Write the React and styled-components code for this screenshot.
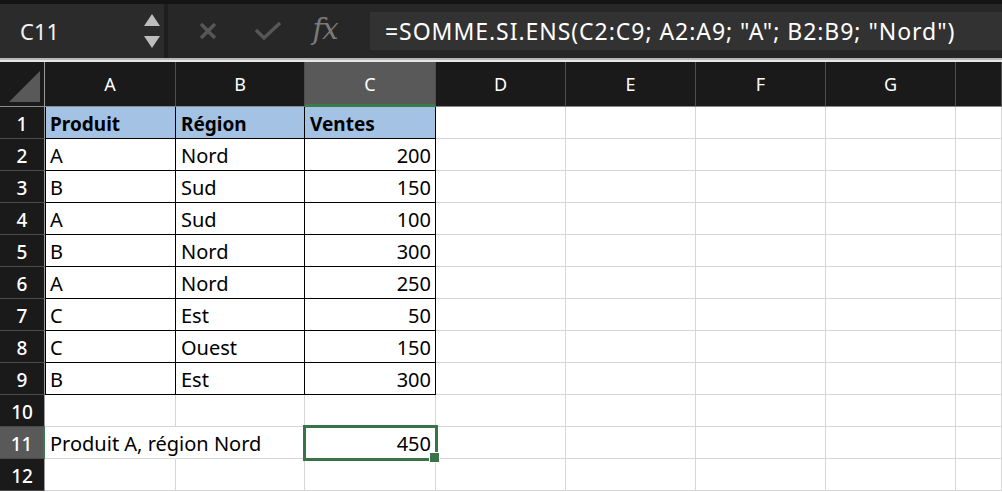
import React from "react";
import styled, { createGlobalStyle } from "styled-components";

const Global = createGlobalStyle`
  html, body { margin: 0; padding: 0; background: #ffffff; overflow: hidden; }
  body { font-family: "Noto Sans", "Open Sans", sans-serif; }
`;

const Page = styled.div`
  width: 1002px;
  height: 492px;
  display: flex;
  flex-direction: column;
  overflow: hidden;
`;

const Toolbar = styled.div`
  height: 54px;
  border-top: 4px solid #141414;
  background: #272727;
  display: flex;
  align-items: center;
`;

const NameBox = styled.div`
  width: 168px;
  height: 100%;
  background: #2b2b2b;
  border-right: 4px solid #1e1e1e;
  box-sizing: border-box;
  display: flex;
  align-items: center;
  justify-content: space-between;
  padding: 0 4px 0 20px;
  color: #f2f2f2;
  font-size: 22px;
`;

const Spinner = styled.div`
  display: flex;
  flex-direction: column;
  gap: 10px;
`;

const ToolIcon = styled.div`
  width: ${({ $w }) => $w}px;
  display: flex;
  justify-content: center;
  align-items: center;
`;

const Fx = styled.span`
  font-family: "DejaVu Serif", "Liberation Serif", serif;
  font-style: italic;
  font-size: 29px;
  color: #7a7a7a;
  letter-spacing: -1px;
  margin-top: -4px;
`;

const FormulaInput = styled.div`
  flex: 1;
  height: 38px;
  margin-left: 8px;
  background: #323232;
  color: #ffffff;
  font-size: 23px;
  letter-spacing: 0.95px;
  display: flex;
  align-items: center;
  padding-left: 15px;
  white-space: nowrap;
`;

const Divider = styled.div`
  height: 4px;
  border-top: 2px solid #b8b8b8;
  background: #e6e6e6;
  box-sizing: border-box;
`;

const Sheet = styled.div`
  display: grid;
  grid-template-columns: 45px 131px 129px 131px 130px 130px 130px 130px 1fr;
  grid-template-rows: 45px repeat(12, 32px);
  flex: 1;
  background: #ffffff;
`;

const ColHead = styled.div`
  box-sizing: border-box;
  background: ${({ $active }) => ($active ? "#595959" : "#1a1a1a")};
  border-right: 1px solid #4e4e4e;
  border-bottom: ${({ $active }) => ($active ? "3px solid #3b7a4a" : "1px solid #8a8a8a")};
  color: #ffffff;
  font-size: 18px;
  display: flex;
  align-items: center;
  justify-content: center;
  padding-top: ${({ $active }) => ($active ? "2px" : "0")};
`;

const Corner = styled.div`
  box-sizing: border-box;
  background: #1a1a1a;
  border-right: 1px solid #9a9a9a;
  border-bottom: 1px solid #8a8a8a;
  display: flex;
  align-items: flex-end;
  justify-content: flex-end;
  padding: 0 4px 4px 0;
`;

const RowHead = styled.div`
  box-sizing: border-box;
  background: ${({ $active }) => ($active ? "#595959" : "#1a1a1a")};
  border-right: ${({ $active }) => ($active ? "2px solid #3b7a4a" : "1px solid #9a9a9a")};
  border-bottom: 1px solid #4a4a4a;
  color: #ffffff;
  font-size: 19px;
  font-weight: 500;
  display: flex;
  align-items: center;
  justify-content: center;
  padding-top: 2px;
`;

const Cell = styled.div`
  position: relative;
  box-sizing: border-box;
  background: ${({ $head }) => ($head ? "#a4c2e4" : "transparent")};
  border-right: ${({ $boxed, $spill }) =>
    $spill ? "1px solid transparent" : `1px solid ${$boxed ? "#000000" : "#d6d6d6"}`};
  border-bottom: 1px solid ${({ $boxed }) => ($boxed ? "#000000" : "#d6d6d6")};
  border-left: ${({ $first }) => ($first ? "1px solid #000000" : "none")};
  color: #000000;
  font-size: ${({ $head }) => ($head ? "19px" : "20px")};
  font-weight: ${({ $head }) => ($head ? 700 : 400)};
  display: flex;
  align-items: center;
  justify-content: ${({ $num }) => ($num ? "flex-end" : "flex-start")};
  padding: 2px 4px 0 ${({ $first }) => ($first ? "4px" : "5px")};
  white-space: nowrap;
  overflow: visible;
  outline: ${({ $selected }) => ($selected ? "3px solid #3b7349" : "none")};
  outline-offset: -1px;
  z-index: ${({ $selected, $spill }) => ($selected ? 2 : $spill ? 1 : 0)};
`;

const FillHandle = styled.div`
  position: absolute;
  right: -5px;
  bottom: -5px;
  width: 9px;
  height: 9px;
  background: #3b7349;
  border: 1px solid #ffffff;
`;

const columns = ["A", "B", "C", "D", "E", "F", "G", ""];

const data = [
  ["Produit", "Région", "Ventes"],
  ["A", "Nord", "200"],
  ["B", "Sud", "150"],
  ["A", "Sud", "100"],
  ["B", "Nord", "300"],
  ["A", "Nord", "250"],
  ["C", "Est", "50"],
  ["C", "Ouest", "150"],
  ["B", "Est", "300"],
];

function rowCells(r) {
  const cells = [];
  for (let c = 0; c < 8; c++) {
    const inTable = r <= 9 && c < 3;
    let text = "";
    if (inTable) text = data[r - 1][c];
    if (r === 11 && c === 0) text = "Produit A, région Nord";
    if (r === 11 && c === 2) text = "450";
    const selected = r === 11 && c === 2;
    cells.push(
      <Cell
        key={c}
        $boxed={inTable}
        $head={inTable && r === 1}
        $first={inTable && c === 0}
        $num={c === 2 && r !== 1}
        $spill={r === 11 && c === 0}
        $selected={selected}
      >
        {text}
        {selected && <FillHandle />}
      </Cell>
    );
  }
  return cells;
}

export default function App() {
  const rows = Array.from({ length: 12 }, (_, i) => i + 1);
  return (
    <Page>
      <Global />
      <Toolbar>
        <NameBox>
          C11
          <Spinner>
            <svg width="16" height="12" viewBox="0 0 16 12">
              <polygon points="8,0 16,12 0,12" fill="#bdbdbd" />
            </svg>
            <svg width="16" height="12" viewBox="0 0 16 12">
              <polygon points="0,0 16,0 8,12" fill="#bdbdbd" />
            </svg>
          </Spinner>
        </NameBox>
        <ToolIcon $w={80}>
          <svg width="18" height="18" viewBox="0 0 18 18">
            <path d="M2 2 L16 16 M16 2 L2 16" stroke="#575757" strokeWidth="3.4" />
          </svg>
        </ToolIcon>
        <ToolIcon $w={40}>
          <svg width="28" height="20" viewBox="0 0 28 20">
            <path d="M2 9 L10 17 L26 2" stroke="#575757" strokeWidth="3.4" fill="none" />
          </svg>
        </ToolIcon>
        <ToolIcon $w={74}>
          <Fx>fx</Fx>
        </ToolIcon>
        <FormulaInput>=SOMME.SI.ENS(C2:C9; A2:A9; "A"; B2:B9; "Nord")</FormulaInput>
      </Toolbar>
      <Divider />
      <Sheet>
        <Corner>
          <svg width="31" height="31" viewBox="0 0 31 31">
            <polygon points="31,0 31,31 0,31" fill="#595959" />
          </svg>
        </Corner>
        {columns.map((c, i) => (
          <ColHead key={i} $active={c === "C"}>
            {c}
          </ColHead>
        ))}
        {rows.map((r) => (
          <React.Fragment key={r}>
            <RowHead $active={r === 11}>{r}</RowHead>
            {rowCells(r)}
          </React.Fragment>
        ))}
      </Sheet>
    </Page>
  );
}
